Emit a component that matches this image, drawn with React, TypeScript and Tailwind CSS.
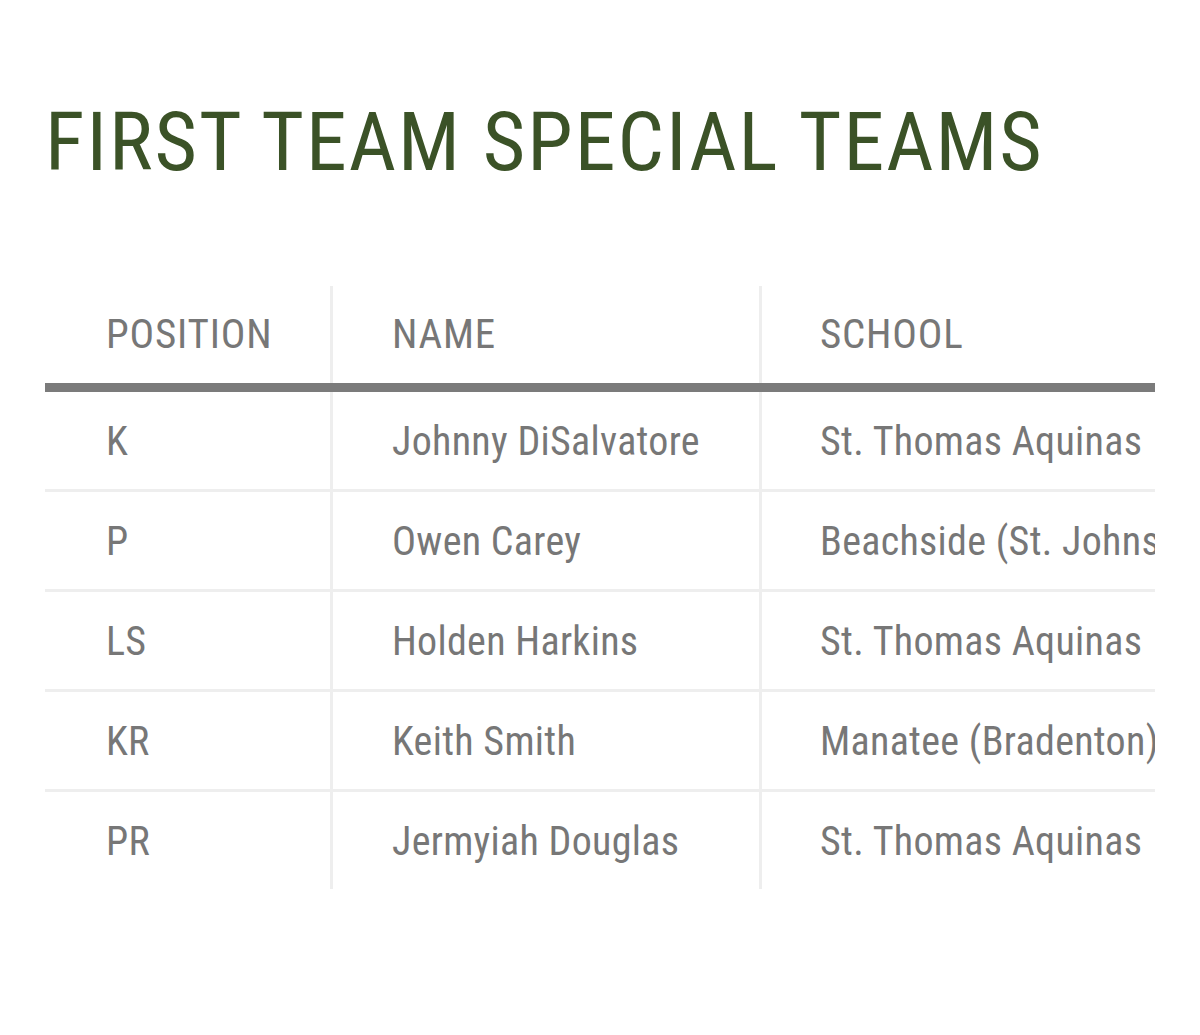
import React from "react";

const rows = [
  ["K", "Johnny DiSalvatore", "St. Thomas Aquinas"],
  ["P", "Owen Carey", "Beachside (St. Johns)"],
  ["LS", "Holden Harkins", "St. Thomas Aquinas"],
  ["KR", "Keith Smith", "Manatee (Bradenton)"],
  ["PR", "Jermyiah Douglas", "St. Thomas Aquinas"],
];

export default function App() {
  return (
    <div
      className="w-[1200px] h-[1035px] bg-white overflow-hidden"
      style={{ fontFamily: "Roboto, 'Liberation Sans', sans-serif" }}
    >
      <h1 className="pt-[101px] pl-[45px] text-[82px] leading-none font-normal tracking-[2px] text-[#3b5227] font-stretch-condensed whitespace-nowrap">
        FIRST TEAM SPECIAL TEAMS
      </h1>
      <div className="mt-[103px] ml-[45px] w-[1110px] overflow-hidden">
        <div className="grid grid-cols-[285px_429px_396px] h-[106px] border-b-[9px] border-[#7b7b7b] text-[41px] leading-none tracking-[0.8px] text-[#777777] font-stretch-condensed whitespace-nowrap">
          <div className="flex items-center pl-[61px]">POSITION</div>
          <div className="flex items-center pl-[59px] border-l-[3px] border-[#eeeeee]">NAME</div>
          <div className="flex items-center pl-[58px] border-l-[3px] border-[#eeeeee]">SCHOOL</div>
        </div>
        {rows.map((r, i) => (
          <div
            key={i}
            className={`grid grid-cols-[285px_429px_396px] text-[40px] leading-none tracking-[0.3px] text-[#777777] font-stretch-condensed whitespace-nowrap ${
              i < rows.length - 1 ? "h-[100px] border-b-[3px] border-[#eeeeee]" : "h-[97px]"
            }`}
          >
            <div className="flex items-center pl-[61px] pt-[2px]">{r[0]}</div>
            <div className="flex items-center pl-[59px] pt-[2px] border-l-[3px] border-[#eeeeee]">{r[1]}</div>
            <div className="flex items-center pl-[58px] pt-[2px] border-l-[3px] border-[#eeeeee] overflow-hidden">{r[2]}</div>
          </div>
        ))}
      </div>
    </div>
  );
}
